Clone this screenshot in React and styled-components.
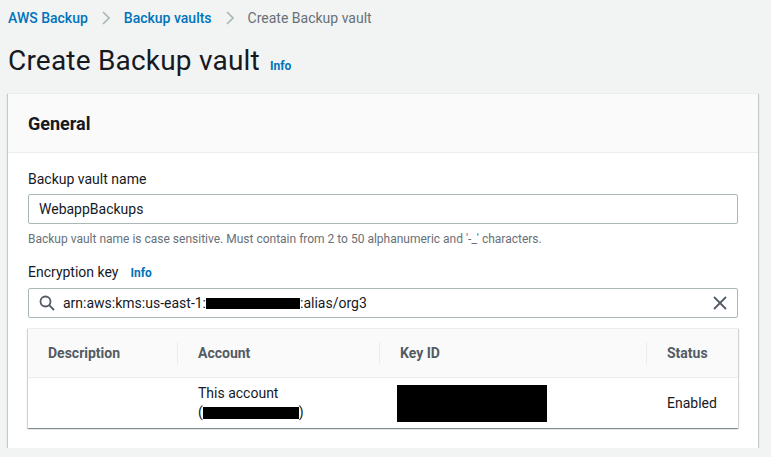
import React from 'react'
import styled, { createGlobalStyle } from 'styled-components'

const GlobalStyle = createGlobalStyle`
    html, body {
        margin: 0;
        padding: 0;
        background: #f2f3f3;
        font-family: Roboto, "Liberation Sans", Arial, sans-serif;
        color: #16191f;
    }
`

const Page = styled.div`
    width: 750px;
    padding: 6px 13px 0 8px;
`
const Breadcrumbs = styled.nav`
    display: flex;
    align-items: center;
    height: 24px;
    font-size: 14px;
`
const Crumb = styled.a`
    color: ${p => (p.current ? '#687078' : '#0073bb')};
    text-decoration: none;
    font-weight: ${p => (p.current ? 400 : 500)};
`
const Chevron = styled.span`
    display: flex;
    margin: 0 14px;
    color: #aab7b8;
`
const TitleRow = styled.div`
    display: flex;
    align-items: baseline;
    margin-top: 13px;
    height: 36px;
`
const Title = styled.h1`
    margin: 0;
    font-size: 28px;
    font-weight: 400;
    line-height: 36px;
    letter-spacing: 0.2px;
`
const InfoLink = styled.a`
    color: #0073bb;
    font-size: 12px;
    font-weight: 700;
    margin-left: ${p => p.gap || 10}px;
    text-decoration: none;
`
const Panel = styled.section`
    margin-top: 14px;
    background: #fff;
    border-top: 1px solid #eaeded;
    box-shadow: 0 1px 1px 0 rgba(0,28,36,0.3), 1px 1px 1px 0 rgba(0,28,36,0.15), -1px 1px 1px 0 rgba(0,28,36,0.15);
`
const PanelHeader = styled.div`
    background: #fafafa;
    border-bottom: 1px solid #eaeded;
    height: 58px;
    display: flex;
    align-items: center;
    padding: 0 20px;
`
const PanelTitle = styled.h2`
    margin: 0;
    font-size: 18px;
    font-weight: 700;
`
const PanelBody = styled.div`
    padding: 15px 20px 20px;
`
const Label = styled.div`
    display: flex;
    align-items: baseline;
    font-size: 14px;
    line-height: 22px;
    margin-bottom: 4px;
`
const InputBox = styled.div`
    display: flex;
    align-items: center;
    height: 30px;
    box-sizing: border-box;
    border: 1px solid #aab7b8;
    border-radius: 2px;
    padding: 0 10px;
    font-size: 14px;
    background: #fff;
`
const Hint = styled.div`
    font-size: 12px;
    color: #687078;
    line-height: 16px;
    margin-top: 7px;
`
const Field = styled.div`
    margin-top: ${p => p.top || 0}px;
`
const Redacted = styled.span`
    display: inline-block;
    background: #000;
    width: ${p => p.w}px;
    height: ${p => p.h}px;
    vertical-align: middle;
`
const SearchText = styled.span`
    flex: 1;
    margin-left: 8px;
    display: flex;
    align-items: center;
`
const Table = styled.div`
    margin-top: 10px;
    display: grid;
    grid-template-columns: 150px 202px 267px 1fr;
    border-top: 1px solid #eaeded;
    box-shadow: 0 1px 1px 0 rgba(0,28,36,0.3), 1px 1px 1px 0 rgba(0,28,36,0.15), -1px 1px 1px 0 rgba(0,28,36,0.15);
`
const HeadCell = styled.div`
    position: relative;
    background: #fafafa;
    height: 48px;
    border-bottom: 1px solid #eaeded;
    display: flex;
    align-items: center;
    padding: 0 20px;
    font-size: 14px;
    font-weight: 700;
    color: #545b64;
    ${p => p.divider && `
        &::after {
            content: '';
            position: absolute;
            right: 0;
            top: 13px;
            bottom: 13px;
            border-right: 1px solid #eaeded;
        }
    `}
`
const Cell = styled.div`
    height: 50px;
    display: flex;
    flex-direction: column;
    justify-content: center;
    padding: 0 ${p => p.pad || 20}px;
    font-size: 14px;
    line-height: 19px;
`

const App = () => {
    return (
        <>
            <GlobalStyle />
            <Page>
                <Breadcrumbs>
                    <Crumb>AWS Backup</Crumb>
                    <Chevron>
                        <svg width="8" height="14" viewBox="0 0 8 14" fill="none" stroke="currentColor" strokeWidth="1.6">
                            <polyline points="1,1 7,7 1,13" />
                        </svg>
                    </Chevron>
                    <Crumb>Backup vaults</Crumb>
                    <Chevron>
                        <svg width="8" height="14" viewBox="0 0 8 14" fill="none" stroke="currentColor" strokeWidth="1.6">
                            <polyline points="1,1 7,7 1,13" />
                        </svg>
                    </Chevron>
                    <Crumb current>Create Backup vault</Crumb>
                </Breadcrumbs>

                <TitleRow>
                    <Title>Create Backup vault</Title>
                    <InfoLink>Info</InfoLink>
                </TitleRow>

                <Panel>
                    <PanelHeader>
                        <PanelTitle>General</PanelTitle>
                    </PanelHeader>
                    <PanelBody>
                        <Field>
                            <Label>Backup vault name</Label>
                            <InputBox>WebappBackups</InputBox>
                            <Hint>Backup vault name is case sensitive. Must contain from 2 to 50 alphanumeric and '-_' characters.</Hint>
                        </Field>
                        <Field top={14}>
                            <Label>Encryption key<InfoLink gap={12}>Info</InfoLink></Label>
                            <InputBox>
                                <svg width="16" height="16" viewBox="0 0 16 16" fill="none" stroke="#545b64" strokeWidth="1.8">
                                    <circle cx="6.5" cy="6.5" r="5" />
                                    <line x1="10.2" y1="10.2" x2="15" y2="15" />
                                </svg>
                                <SearchText>
                                    arn:aws:kms:us-east-1:<Redacted w={94} h={11} />:alias/org3
                                </SearchText>
                                <svg width="14" height="14" viewBox="0 0 14 14" fill="none" stroke="#545b64" strokeWidth="1.8">
                                    <line x1="1" y1="1" x2="13" y2="13" />
                                    <line x1="13" y1="1" x2="1" y2="13" />
                                </svg>
                            </InputBox>
                        </Field>

                        <Table>
                            <HeadCell divider>Description</HeadCell>
                            <HeadCell divider>Account</HeadCell>
                            <HeadCell divider>Key ID</HeadCell>
                            <HeadCell>Status</HeadCell>

                            <Cell />
                            <Cell>
                                <div>This account</div>
                                <div>(<Redacted w={96} h={12} />)</div>
                            </Cell>
                            <Cell pad={17}>
                                <Redacted w={150} h={37} />
                            </Cell>
                            <Cell>Enabled</Cell>
                        </Table>
                    </PanelBody>
                </Panel>
            </Page>
        </>
    )
}

export default App
